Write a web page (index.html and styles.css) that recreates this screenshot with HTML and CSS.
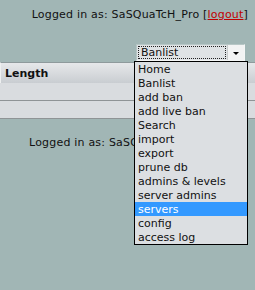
FILE: index.html
```html
<!DOCTYPE html>
<html>
<head>
<meta charset="utf-8">
<link rel="stylesheet" href="styles.css">
</head>
<body>
<div class="page">
  <div class="login">Logged in as: SaSQuaTcH_Pro [<a class="logout" href="#">logout</a>]</div>
  <div class="navrow">
    <div class="select">
      <div class="select-value"><span>Banlist</span></div>
      <div class="select-btn"><span class="arrow"></span></div>
    </div>
  </div>
  <div class="table">
    <div class="thead"><span class="th">Length</span></div>
    <div class="trow"></div>
    <div class="trow"></div>
  </div>
  <div class="login2">Logged in as: SaSQuaTcH_Pro [<a class="logout" href="#">logout</a>]</div>
  <ul class="dropdown">
    <li>Home</li>
    <li>Banlist</li>
    <li>add ban</li>
    <li>add live ban</li>
    <li>Search</li>
    <li>import</li>
    <li>export</li>
    <li>prune db</li>
    <li>admins &amp; levels</li>
    <li>server admins</li>
    <li class="active">servers</li>
    <li>config</li>
    <li>access log</li>
  </ul>
</div>
</body>
</html>
```
FILE: styles.css
```css
html, body {
  margin: 0;
  padding: 0;
  background: #a1b6b5;
  font-family: "DejaVu Sans", Verdana, sans-serif;
  font-size: 11px;
  color: #111;
}
.page {
  position: relative;
  width: 255px;
  height: 290px;
  overflow: hidden;
}
.login {
  padding-top: 8px;
  height: 14px;
  line-height: 14px;
  text-align: right;
  padding-right: 7px;
  white-space: nowrap;
  letter-spacing: 0.2px;
}
.logout {
  color: #c00000;
  text-decoration: underline;
}
.navrow {
  display: flex;
  justify-content: flex-end;
  padding-top: 22px;
  padding-right: 10px;
}
.select {
  display: flex;
  width: 109px;
  height: 17px;
  box-sizing: border-box;
  border: 1px solid #f4f6f6;
  border-left-color: #b6c6c5;
  border-top-color: #b6c6c5;
  background: #dfe3e5;
}
.select-value {
  flex: 1;
  padding: 1px;
  display: flex;
}
.select-value span {
  flex: 1;
  border: 1px dotted #222;
  line-height: 11px;
  padding-left: 2px;
  background: #dfe3e5;
}
.select-btn {
  width: 16px;
  background: #f2f3f3;
  border-left: 1px solid #c8cccc;
  display: flex;
  align-items: center;
  justify-content: center;
}
.arrow {
  width: 0;
  height: 0;
  border-left: 3px solid transparent;
  border-right: 3px solid transparent;
  border-top: 3px solid #000;
  margin-top: 1px;
}
.table {
  margin-top: 1px;
}
.thead {
  height: 20px;
  border-top: 1px solid #8e9a9c;
  background: linear-gradient(#e6e8ea, #c9cdd1);
  display: flex;
  align-items: center;
  padding-left: 4px;
  border-left: 1px solid #eef0f0;
}
.th {
  font-weight: bold;
}
.trow {
  height: 17px;
  background: #d9dcdf;
  border-bottom: 1px solid #8f9496;
}
.login2 {
  margin-top: 17px;
  margin-left: 29px;
  line-height: 14px;
  white-space: nowrap;
  letter-spacing: 0.2px;
}
.dropdown {
  position: absolute;
  left: 134px;
  top: 61px;
  width: 112px;
  margin: 0;
  padding: 0;
  list-style: none;
  background: #dcdfe2;
  border: 1px solid #000;
}
.dropdown li {
  height: 14px;
  line-height: 15px;
  padding-left: 3px;
  white-space: nowrap;
}
.dropdown li.active {
  background: #3399ff;
  color: #fff;
}
```
